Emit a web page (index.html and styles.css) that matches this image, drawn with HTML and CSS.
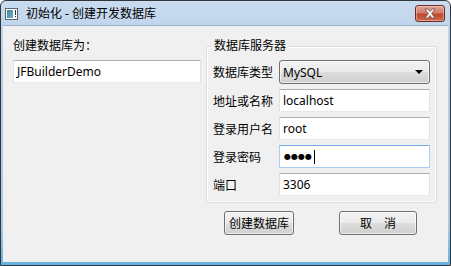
FILE: index.html
```html
<!DOCTYPE html>
<html lang="zh">
<head>
    <meta charset="UTF-8">
    <title>初始化 - 创建开发数据库</title>
    <link rel="stylesheet" href="styles.css">
</head>
<body>
<div class="window">
    <div class="titlebar">
        <svg class="app-icon" width="13" height="12" viewBox="0 0 13 12">
            <rect x="0.5" y="0.5" width="12" height="11" fill="#fff" stroke="#5a6470"/>
            <defs>
                <linearGradient id="ig" x1="0" y1="0" x2="1" y2="1">
                    <stop offset="0" stop-color="#3e8f8a"/>
                    <stop offset="1" stop-color="#6fa7d8"/>
                </linearGradient>
            </defs>
            <rect x="2" y="2" width="6" height="8" fill="url(#ig)"/>
            <rect x="10" y="2" width="1" height="5" fill="#333"/>
            <rect x="10" y="8" width="1" height="1" fill="#333"/>
        </svg>
        <span class="title">初始化 - 创建开发数据库</span>
        <div class="close-btn">
            <svg width="16" height="11" viewBox="0 0 16 11">
                <path d="M3 1 L6 1 L8 3.5 L10 1 L13 1 L9.6 5.5 L13 10 L10 10 L8 7.5 L6 10 L3 10 L6.4 5.5 Z" fill="#fff" stroke="#6b4a45" stroke-width="0.8"/>
            </svg>
        </div>
    </div>

    <div class="client">
        <div class="left-col">
            <div class="label">创建数据库为：</div>
            <div class="textbox">JFBuilderDemo</div>
        </div>

        <div class="right-col">
            <div class="group">
                <span class="group-title">数据库服务器</span>
                <div class="row">
                    <span class="row-label">数据库类型</span>
                    <div class="combo">
                        <span>MySQL</span>
                        <span class="arrow"></span>
                    </div>
                </div>
                <div class="row">
                    <span class="row-label">地址或名称</span>
                    <div class="textbox">localhost</div>
                </div>
                <div class="row">
                    <span class="row-label">登录用户名</span>
                    <div class="textbox">root</div>
                </div>
                <div class="row">
                    <span class="row-label">登录密码</span>
                    <div class="pwbox"><span class="dots">●●●●</span><span class="caret"></span></div>
                </div>
                <div class="row">
                    <span class="row-label">端口</span>
                    <div class="textbox">3306</div>
                </div>
            </div>

            <div class="buttons">
                <div class="button create">创建数据库</div>
                <div class="button cancel">取　消</div>
            </div>
        </div>
    </div>
</div>
</body>
</html>
```

FILE: styles.css
```css
* {
    margin: 0;
    padding: 0;
    box-sizing: border-box;
}

body {
    background: #fff;
    font-family: "Noto Sans", "Noto Sans CJK SC", sans-serif;
    font-size: 12px;
    color: #000;
    width: 451px;
    height: 266px;
    overflow: hidden;
}

.window {
    width: 451px;
    height: 266px;
    border: 1px solid #30363c;
    border-radius: 6px 6px 0 0;
    background: linear-gradient(#c9dbef, #b7cfea 20%, #a9c9e8 85%, #62b2de);
    display: flex;
    flex-direction: column;
}

/* title bar */
.titlebar {
    height: 24px;
    display: flex;
    align-items: flex-start;
    padding-left: 4px;
}

.app-icon {
    margin-top: 7px;
    flex-shrink: 0;
}

.title {
    margin-left: 8px;
    margin-top: 5px;
    line-height: 16px;
    color: #000;
}

.close-btn {
    margin-left: auto;
    margin-right: 5px;
    margin-top: 4px;
    width: 30px;
    height: 17px;
    border: 1px solid #6e2d24;
    border-radius: 3px;
    background: linear-gradient(#e4a496, #d07c69 45%, #c0472f 55%, #cd6b4f);
    display: flex;
    align-items: center;
    justify-content: center;
    box-shadow: inset 0 0 0 1px rgba(255, 255, 255, 0.35);
}

/* client area */
.client {
    height: 237px;
    margin: 0 2px;
    background: #f0f0f0;
    border-top: 1px solid #9fb3c9;
    display: flex;
}

.left-col {
    width: 188px;
    margin-left: 10px;
    padding-top: 13px;
}

.label {
    line-height: 14px;
    margin-bottom: 7px;
}

.textbox {
    height: 23px;
    background: #fff;
    border: 1px solid #e2e3ea;
    border-top-color: #abadb3;
    border-bottom-color: #e3e9ef;
    line-height: 21px;
    padding: 0 3px;
    display: flex;
    align-items: center;
}

.right-col {
    margin-left: 5px;
    padding-top: 20px;
}

.group {
    position: relative;
    width: 231px;
    border: 1px solid #d5dfe5;
    border-radius: 3px;
    box-shadow: inset 0 0 0 1px #fff;
    padding: 13px 6px 6px 6px;
    display: flex;
    flex-direction: column;
    gap: 5px;
}

.group-title {
    position: absolute;
    top: -8px;
    left: 5px;
    padding: 0 2px;
    line-height: 14px;
    background: #f0f0f0;
}

.row {
    display: flex;
    align-items: center;
}

.row-label {
    width: 66px;
    flex-shrink: 0;
}

.row .textbox {
    width: 151px;
}

.pwbox {
    width: 151px;
    height: 23px;
    background: #fff;
    border: 1px solid #a9cdf0;
    border-top-color: #72ace6;
    padding: 0 3px;
    display: flex;
    align-items: center;
}

.dots {
    font-family: "DejaVu Sans", sans-serif;
    font-size: 8px;
    margin-left: 1px;
}

.caret {
    width: 1px;
    height: 14px;
    background: #000;
    margin-left: 2px;
}

.combo {
    width: 151px;
    height: 24px;
    border: 1px solid #707070;
    border-radius: 3px;
    background: linear-gradient(#f2f2f2, #ebebeb 50%, #dddddd 51%, #cfcfcf);
    box-shadow: inset 0 0 0 1px rgba(255, 255, 255, 0.6);
    display: flex;
    align-items: center;
    padding: 0 6px 0 3px;
}

.arrow {
    margin-left: auto;
    width: 0;
    height: 0;
    border-left: 4px solid transparent;
    border-right: 4px solid transparent;
    border-top: 4px solid #000;
}

.buttons {
    display: flex;
    gap: 45px;
    padding-left: 18px;
    margin-top: 8px;
}

.button {
    height: 24px;
    border: 1px solid #707070;
    border-radius: 3px;
    background: linear-gradient(#f2f2f2, #ebebeb 50%, #dddddd 51%, #cfcfcf);
    box-shadow: inset 0 0 0 1px rgba(255, 255, 255, 0.6);
    display: flex;
    align-items: center;
    justify-content: center;
}

.create {
    width: 70px;
}

.cancel {
    width: 78px;
}
```
